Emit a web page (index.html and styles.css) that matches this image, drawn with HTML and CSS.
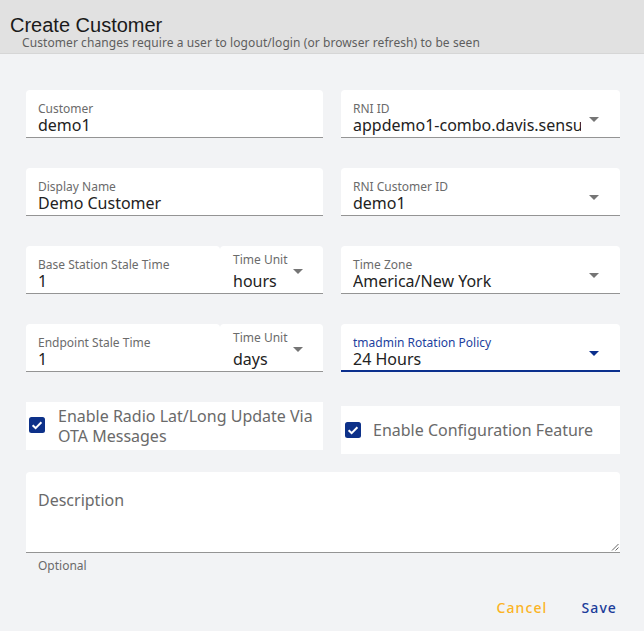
FILE: index.html
```html
<!DOCTYPE html>
<html>
<head>
<meta charset="utf-8">
<link rel="stylesheet" href="styles.css">
</head>
<body>
<div class="dialog">
  <header class="head">
    <div class="title">Create Customer</div>
    <div class="subtitle">Customer changes require a user to logout/login (or browser refresh) to be seen</div>
  </header>
  <main class="content">
    <div class="grid">
      <div class="field">
        <div class="inner">
          <div class="label">Customer</div>
          <div class="value">demo1</div>
        </div>
      </div>
      <div class="field select">
        <div class="inner">
          <div class="label">RNI ID</div>
          <div class="value">appdemo1-combo.davis.sensus.com</div>
        </div>
        <span class="arrow"></span>
      </div>

      <div class="field">
        <div class="inner">
          <div class="label">Display Name</div>
          <div class="value">Demo Customer</div>
        </div>
      </div>
      <div class="field select">
        <div class="inner">
          <div class="label">RNI Customer ID</div>
          <div class="value">demo1</div>
        </div>
        <span class="arrow"></span>
      </div>

      <div class="pair">
        <div class="field num">
          <div class="inner">
            <div class="label">Base Station Stale Time</div>
            <div class="value">1</div>
          </div>
        </div>
        <div class="field select unit">
          <div class="inner">
            <div class="label">Time Unit</div>
            <div class="value">hours</div>
          </div>
          <span class="arrow"></span>
        </div>
      </div>
      <div class="field select">
        <div class="inner">
          <div class="label">Time Zone</div>
          <div class="value">America/New York</div>
        </div>
        <span class="arrow"></span>
      </div>

      <div class="pair">
        <div class="field num">
          <div class="inner">
            <div class="label">Endpoint Stale Time</div>
            <div class="value">1</div>
          </div>
        </div>
        <div class="field select unit">
          <div class="inner">
            <div class="label">Time Unit</div>
            <div class="value">days</div>
          </div>
          <span class="arrow"></span>
        </div>
      </div>
      <div class="field select focused">
        <div class="inner">
          <div class="label">tmadmin Rotation Policy</div>
          <div class="value">24 Hours</div>
        </div>
        <span class="arrow"></span>
      </div>

      <div class="check left">
        <svg class="box" width="16" height="16" viewBox="0 0 16 16"><rect x="0" y="0" width="16" height="16" rx="2.5" fill="#0d3189"/><path d="M3.6 8.3 L6.6 11.1 L12.4 5.2" fill="none" stroke="#fff" stroke-width="2"/></svg>
        <span class="ctext">Enable Radio Lat/Long Update Via OTA Messages</span>
      </div>
      <div class="check right">
        <svg class="box" width="16" height="16" viewBox="0 0 16 16"><rect x="0" y="0" width="16" height="16" rx="2.5" fill="#0d3189"/><path d="M3.6 8.3 L6.6 11.1 L12.4 5.2" fill="none" stroke="#fff" stroke-width="2"/></svg>
        <span class="ctext">Enable Configuration Feature</span>
      </div>
    </div>

    <div class="desc">
      <div class="desc-label">Description</div>
      <svg class="grip" width="8" height="8" viewBox="0 0 8 8"><path d="M1 7.5 L7.5 1 M4.5 7.5 L7.5 4.5" stroke="#555" stroke-width="0.9" fill="none"/></svg>
    </div>
    <div class="hint">Optional</div>

    <div class="actions">
      <span class="btn cancel">Cancel</span>
      <span class="btn save">Save</span>
    </div>
  </main>
</div>
</body>
</html>
```
FILE: styles.css
```css
html, body {
  margin: 0;
  padding: 0;
}
body {
  background: #f2f3f5;
  font-family: "Noto Sans", "Open Sans", sans-serif;
  width: 644px;
  height: 631px;
  overflow: hidden;
}
.dialog {
  display: flex;
  flex-direction: column;
}
.head {
  background: #e1e1e1;
  border-bottom: 1px solid #d6d6d6;
  height: 54px;
  box-sizing: border-box;
  padding-top: 14px;
}
.title {
  font-family: "Liberation Sans", Arial, sans-serif;
  font-size: 20px;
  line-height: 22px;
  color: #1a1a1a;
  padding-left: 10px;
}
.subtitle {
  font-size: 12px;
  line-height: 13px;
  letter-spacing: 0.08px;
  color: #5e5e5e;
  padding-left: 22px;
}
.content {
  padding: 36px 24px 0 26px;
  display: flex;
  flex-direction: column;
}
.grid {
  display: grid;
  grid-template-columns: 297px 279px;
  column-gap: 18px;
  row-gap: 30px;
}
.field {
  background: #fff;
  border-radius: 4px 4px 0 0;
  border-bottom: 1px solid #949494;
  height: 48px;
  box-sizing: border-box;
  padding: 11px 12px 0 12px;
  display: flex;
  align-items: flex-start;
  min-width: 0;
}
.inner {
  flex: 1;
  min-width: 0;
  display: flex;
  flex-direction: column;
}
.label {
  font-size: 12px;
  line-height: 16px;
  color: #6b6b6b;
  white-space: nowrap;
}
.value {
  font-size: 16px;
  line-height: 22px;
  margin-top: -3px;
  color: #222;
  white-space: nowrap;
  overflow-x: clip;
  overflow-y: visible;
}
.select {
  padding-right: 21px;
}
.select .inner {
  margin-right: 8px;
}
.arrow {
  width: 0;
  height: 0;
  border-left: 5px solid transparent;
  border-right: 5px solid transparent;
  border-top: 5px solid #757575;
  margin-top: 16px;
  flex: none;
}
.pair {
  display: flex;
}
.num {
  width: 194px;
  flex: none;
}
.unit {
  flex: 1;
  padding-left: 13px;
  padding-top: 6px;
  padding-right: 20px;
}
.unit .inner {
  margin-right: 4px;
}
.unit .value {
  margin-top: 2px;
}
.unit .arrow {
  margin-top: 17px;
}
.focused {
  border-bottom: 2px solid #0b2f8d;
}
.focused .label {
  color: #1d3f9e;
}
.focused .arrow {
  border-top-color: #0b2f8d;
}
.check {
  background: #fff;
  display: flex;
  align-items: center;
  height: 48px;
  box-sizing: border-box;
}
.check.left {
  padding-left: 3px;
}
.check.left .box {
  margin-right: 13px;
  margin-top: -2px;
}
.check.right {
  margin-top: 4px;
  padding-left: 4px;
}
.check.right .box {
  margin-right: 12px;
}
.box {
  flex: none;
}
.ctext {
  font-size: 16px;
  line-height: 20px;
  color: #6a6a6a;
}
.desc {
  margin-top: 18px;
  background: #fff;
  border-radius: 4px 4px 0 0;
  border-bottom: 1px solid #949494;
  height: 81px;
  box-sizing: border-box;
  padding: 17px 12px 0 12px;
  position: relative;
}
.desc-label {
  font-size: 16px;
  line-height: 22px;
  color: #6a6a6a;
}
.grip {
  position: absolute;
  right: 1px;
  bottom: 1px;
}
.hint {
  font-size: 12px;
  line-height: 16px;
  color: #6a6a6a;
  padding-left: 12px;
  margin-top: 5px;
}
.actions {
  display: flex;
  justify-content: flex-end;
  gap: 34px;
  margin-top: 24px;
  padding-right: 3px;
}
.btn {
  font-size: 14px;
  line-height: 20px;
  letter-spacing: 1.1px;
  font-weight: 500;
}
.cancel {
  color: #fbb324;
}
.save {
  color: #1b3c9a;
}
```
